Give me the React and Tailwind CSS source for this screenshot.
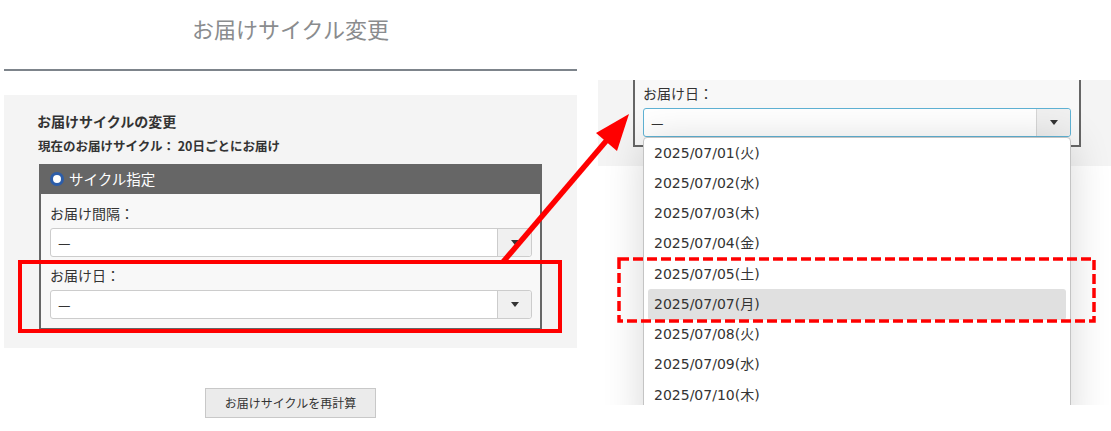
import React from "react";

const FONT = { fontFamily: '"Noto Sans CJK JP", "Noto Sans", sans-serif' };
const DATE_FONT = { fontFamily: '"DejaVu Sans", "Noto Sans CJK JP", sans-serif' };

function Caret() {
  return (
    <svg width="8" height="5" viewBox="0 0 8 5">
      <path d="M0 0 H8 L4 5 Z" fill="#333" />
    </svg>
  );
}

function Select({ focused }) {
  return (
    <div
      className={
        "flex h-[29px] rounded-[3px] border bg-white " +
        (focused ? "border-[#5fb2d4]" : "border-[#cccccc]")
      }
    >
      <div className="flex flex-1 items-center pl-[7px] text-[14px] text-[#333]">—</div>
      <div
        className={
          "flex w-[34px] items-center justify-center rounded-r-[3px] border-l bg-[#f0f0f0] " +
          (focused ? "border-[#d6d6d6]" : "border-[#cccccc]")
        }
      >
        <Caret />
      </div>
    </div>
  );
}

const DATES = [
  "2025/07/01(火)",
  "2025/07/02(水)",
  "2025/07/03(木)",
  "2025/07/04(金)",
  "2025/07/05(土)",
  "2025/07/07(月)",
  "2025/07/08(火)",
  "2025/07/09(水)",
  "2025/07/10(木)",
];

export default function App() {
  return (
    <div className="relative h-[431px] w-[1111px] overflow-hidden bg-white" style={FONT}>
      <div className="flex">
        {/* left column */}
        <div className="ml-[4px] flex w-[573px] flex-col">
          <div className="pt-[13px] text-center text-[22px] leading-[30px] text-[#8a8c8e]">
            お届けサイクル変更
          </div>
          <div className="mt-[26px] h-[2px] bg-[#7d848b]" />
          <div className="mt-[24px] flex h-[253px] flex-col bg-[#f4f4f4] pl-[33px] pt-[16px]">
            <div className="text-[14px] font-bold leading-[20px] text-[#333]">お届けサイクルの変更</div>
            <div className="mt-[6px] pl-[1px] text-[12.5px] font-bold leading-[18px] text-[#333]">
              現在のお届けサイクル： 20日ごとにお届け
            </div>
            <div className="ml-[2px] mt-[9px] w-[503px] border-x-2 border-b-2 border-[#666666] bg-[#f8f8f8]">
              <div className="-mx-[2px] flex h-[30px] items-center gap-[5px] bg-[#666666] pl-[11px]">
                <span className="block h-[14px] w-[14px] rounded-full border-[3.5px] border-[#2c5da9] bg-white" />
                <span className="text-[14.5px] text-white">サイクル指定</span>
              </div>
              <div className="pb-[9px] pl-[9px] pr-[8px] pt-[9px]">
                <div className="text-[14px] leading-[20px] text-[#333]">お届け間隔：</div>
                <div className="mt-[5px]">
                  <Select />
                </div>
                <div className="mt-[8px] text-[14px] leading-[20px] text-[#333]">お届け日：</div>
                <div className="mt-[5px]">
                  <Select />
                </div>
              </div>
            </div>
          </div>
          <div className="mt-[40px] flex justify-center">
            <button className="h-[30px] w-[171px] border border-[#c8c8c8] bg-[#ebebeb] text-[12px] text-[#333]">
              お届けサイクルを再計算
            </button>
          </div>
        </div>

        {/* right column: zoomed view */}
        <div className="relative ml-[21px] mt-[80px] h-[325px] w-[513px] overflow-hidden bg-white">
          <div className="h-[86px] bg-[#f4f4f4]">
            <div className="ml-[35px] w-[448px] border-x-2 border-b-2 border-[#666666] bg-[#f8f8f8] px-[8px] pb-[8px] pt-[3px]">
              <div className="text-[14px] leading-[20px] text-[#333]">お届け日：</div>
              <div className="mt-[5px]">
                <Select focused />
              </div>
            </div>
          </div>
          <div className="absolute left-[45px] top-[57px] h-[300px] w-[428px] rounded-[4px] border border-[#c4c4c4] bg-white shadow-[0_4px_40px_rgba(0,0,0,0.16)]">
            {DATES.map((d, i) => (
              <div key={d} className="flex h-[30.25px] items-center px-[4px]">
                <div
                  style={DATE_FONT}
                  className={
                    "flex h-full w-full items-center rounded-[3px] pl-[6px] text-[14px] text-[#333] " +
                    (i === 5 ? "bg-[#e0e0e0]" : "")
                  }
                >
                  {d}
                </div>
              </div>
            ))}
          </div>
        </div>
      </div>

      {/* annotations */}
      <svg
        className="pointer-events-none absolute left-0 top-0"
        width="1111"
        height="431"
        viewBox="0 0 1111 431"
      >
        <rect x="20" y="262" width="540" height="69" fill="none" stroke="#ff0000" strokeWidth="4" />
        <line x1="503" y1="262" x2="607" y2="140" stroke="#ff0000" strokeWidth="5.5" />
        <polygon points="629,114 596,133 617,151" fill="#ff0000" />
        <rect
          x="619"
          y="259"
          width="475"
          height="62"
          fill="none"
          stroke="#ff0000"
          strokeWidth="3.5"
          strokeDasharray="10 4"
        />
      </svg>
    </div>
  );
}
